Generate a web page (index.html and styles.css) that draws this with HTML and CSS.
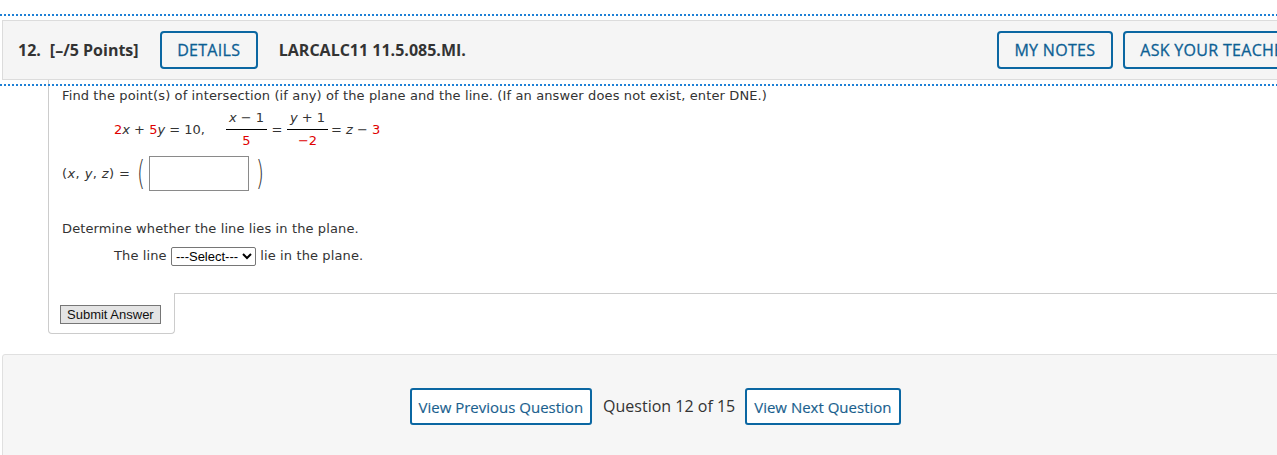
FILE: index.html
```html
<!DOCTYPE html>
<html>
<head>
<meta charset="utf-8">
<link rel="stylesheet" href="styles.css">
</head>
<body>
<div class="page">
  <div class="qheader">
    <span class="qnum">12.</span>
    <span class="qpts">[–/5 Points]</span>
    <button class="btn-outline">DETAILS</button>
    <span class="qcode">LARCALC11 11.5.085.MI.</span>
    <span class="spacer"></span>
    <button class="btn-outline">MY NOTES</button>
    <button class="btn-outline">ASK YOUR TEACHER</button>
  </div>

  <div class="qwrap">
    <div class="qbody">
      <p class="line1">Find the point(s) of intersection (if any) of the plane and the line. (If an answer does not exist, enter DNE.)</p>
      <div class="eq">
        <span><span class="r">2</span><i>x</i> + <span class="r">5</span><i>y</i> = 10,</span>
        <span class="frac first"><span class="num"><i>x</i> − 1</span><span class="den r">5</span></span>
        <span class="op1">=</span>
        <span class="frac"><span class="num"><i>y</i> + 1</span><span class="den r">−2</span></span>
        <span class="op2">= <i>z</i> − <span class="r">3</span></span>
      </div>
      <div class="ansrow">
        <span class="tuple">(<i>x</i>, <i>y</i>, <i>z</i>) =</span>
        <span class="paren pl">(</span>
        <input class="ans" type="text">
        <span class="paren pr">)</span>
      </div>
      <p class="line2">Determine whether the line lies in the plane.</p>
      <div class="selrow">The line <select class="sel"><option>---Select---</option></select> lie in the plane.</div>
    </div>
    <div class="qfoot">
      <div class="tab"><button class="submit">Submit Answer</button></div>
      <div class="rest"></div>
    </div>
  </div>

  <div class="footer">
    <button class="btn-nav">View Previous Question</button>
    <span class="qcount">Question 12 of 15</span>
    <button class="btn-nav">View Next Question</button>
  </div>
</div>
</body>
</html>
```

FILE: styles.css
```css
html, body {
  margin: 0;
  padding: 0;
  background: #fff;
  overflow: hidden;
}
.page {
  width: 1306px;
  margin-left: 2px;
  padding-top: 20px;
  font-family: "Open Sans", "Liberation Sans", sans-serif;
  color: #333;
}
.qheader {
  display: flex;
  align-items: center;
  height: 58px;
  margin-right: -8px;
  padding: 0 4px 0 15px;
  background: #f5f5f5;
  border: 1px solid #dcdcdc;
  outline: 2px dotted #1e80d6;
  outline-offset: 4px;
  font-size: 16px;
  position: relative;
  z-index: 1;
}
.qnum { font-weight: 700; margin-right: 9px; }
.qpts { font-weight: 700; margin-right: 21px; }
.qcode { font-weight: 700; margin-left: 21px; }
.spacer { flex: 1; }
.btn-outline {
  height: 38px;
  padding: 0 15.5px;
  border: 2px solid #0b67a2;
  border-radius: 4px;
  background: transparent;
  color: #0d5f94;
  font-family: "Open Sans", "Liberation Sans", sans-serif;
  font-size: 16px;
  font-weight: 400;
  letter-spacing: 0.3px;
  -webkit-text-stroke: 0.3px #0d5f94;
  margin-left: 10px;
}
.qheader .btn-outline:first-of-type { margin-left: 0; }

.qwrap {
  margin-left: 46px;
}
.qbody {
  border-left: 1px solid #cccccc;
  padding: 7px 0 27px 13px;
  font-family: "DejaVu Sans", Verdana, sans-serif;
  font-size: 13px;
  letter-spacing: 0.12px;
  color: #333;
}
.qbody p { margin: 0; line-height: 18px; }
.r { color: #e00000; }
.eq {
  display: flex;
  align-items: center;
  margin: 6px 0 0 52px;
  height: 36px;
  letter-spacing: 0;
}
.frac {
  display: inline-flex;
  flex-direction: column;
  align-items: center;
  width: 41px;
}
.frac.first { margin-left: 21px; }
.frac .num {
  align-self: stretch;
  text-align: center;
  padding-bottom: 4px;
  border-bottom: 1px solid #000;
  line-height: 15px;
  white-space: nowrap;
}
.frac .den { line-height: 16px; padding-top: 3px; }
.op1 { display: inline-block; width: 20px; text-align: center; }
.op2 { margin-left: 3px; }
.ansrow {
  display: flex;
  align-items: center;
  margin-top: 8px;
  height: 36px;
}
.tuple { letter-spacing: 0.4px; }
.paren {
  display: inline-block;
  width: 10px;
  text-align: center;
  font-size: 34px;
  font-weight: 200;
  line-height: 34px;
  color: #333;
  transform: scaleX(0.6);
}
.pl { margin: 0 4px 0 5px; }
.pr { margin-left: 5px; }
.ans {
  width: 100px;
  height: 35px;
  box-sizing: border-box;
  border: 1px solid #8a8a8a;
  margin: 0;
}
.line2 { margin-top: 29px !important; }
.selrow {
  margin: 8px 0 0 52px;
  line-height: 20px;
}
.sel {
  font-family: "Liberation Sans", Arial, sans-serif;
  font-size: 13px;
  height: 19px;
  padding: 0;
  border: 1px solid #767676;
  border-radius: 2px;
  background: #fff;
  color: #000;
  vertical-align: middle;
  letter-spacing: 0;
}
.qfoot {
  display: flex;
}
.tab {
  border: 1px solid #cccccc;
  border-top: none;
  border-radius: 0 0 4px 4px;
  padding: 12px 13px 9px 11px;
}
.submit {
  font-family: "Liberation Sans", Arial, sans-serif;
  font-size: 13px;
  background: #e4e4e4;
  border: 1px solid #767676;
  border-radius: 0;
  padding: 1px 6px;
  height: 19px;
  color: #111;
  display: block;
}
.rest {
  flex: 1;
  border-top: 1px solid #cccccc;
}
.footer {
  margin-top: 20px;
  height: 110px;
  background: #f6f6f6;
  border: 1px solid #e0e0e0;
  border-radius: 3px;
  display: flex;
  justify-content: center;
  align-items: flex-start;
  padding-top: 33px;
  box-sizing: border-box;
}
.btn-nav {
  height: 37px;
  padding: 0 7px;
  border: 2px solid #0b67a2;
  border-radius: 3px;
  background: #fff;
  color: #1a5f8e;
  font-family: "Open Sans", "Liberation Sans", sans-serif;
  font-size: 15px;
  -webkit-text-stroke: 0.15px #1a5f8e;
}
.qcount {
  font-size: 16px;
  line-height: 37px;
  margin: 0 10px 0 11px;
  color: #333;
}
```
